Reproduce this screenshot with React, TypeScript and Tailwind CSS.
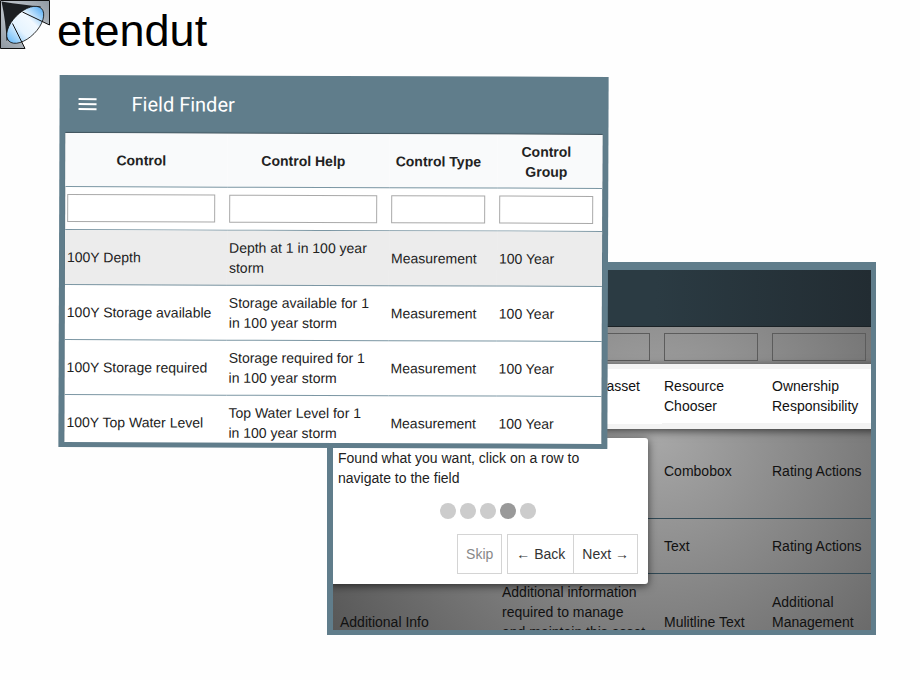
import React from "react";

const fields = [
  { name: "100Y Depth", help: "Depth at 1 in 100 year storm", active: true },
  { name: "100Y Storage available", help: "Storage available for 1 in 100 year storm", active: false },
  { name: "100Y Storage required", help: "Storage required for 1 in 100 year storm", active: false },
  { name: "100Y Top Water Level", help: "Top Water Level for 1 in 100 year storm", active: false },
];

const columns = ["Control", "Control Help", "Control Type", "Control Group"];

function Logo() {
  return (
    <svg width="50" height="50" viewBox="0 0 50 50" aria-hidden="true">
      <defs>
        <linearGradient id="plate" x1="0" y1="1" x2="1" y2="0">
          <stop offset="0" stopColor="#8f98a1" />
          <stop offset="0.5" stopColor="#c2c8ce" />
          <stop offset="1" stopColor="#8f98a1" />
        </linearGradient>
        <linearGradient id="lens" x1="0" y1="0" x2="1" y2="0">
          <stop offset="0" stopColor="#6ebcf8" />
          <stop offset="0.35" stopColor="#e6f4ff" />
          <stop offset="0.65" stopColor="#f2f9ff" />
          <stop offset="1" stopColor="#5fb2f5" />
        </linearGradient>
      </defs>
      <path d="M.5.5H49.5V25L28 15 15 28 25 48.500H.5Z" fill="url(#plate)" />
      <path d="M49.5 25V.5H.5V48.500H25" fill="none" stroke="#111" />
      <path d="M1.500 1.500Q24 5 41 6.500L25 25 6.500 41Q6 22 1.500 1.500Z" fill="#1c1f22" />
      <ellipse cx="25.200" cy="24.800" rx="23" ry="12.500" transform="rotate(-45 25.200 24.800)" fill="url(#lens)" stroke="#111" strokeWidth="0.800" />
      <path d="M22.500 12 49.500 25M12.500 23.500 25 48.500" fill="none" stroke="#111" />
    </svg>
  );
}

function FieldFinder() {
  return (
    <section className="z-10 col-span-2 col-start-1 row-span-2 row-start-1 mb-px flex rotate-[0.2deg] flex-col bg-[#607d8b] px-1.5 pb-[5px]">
      <header className="flex h-[58px] shrink-0 items-center gap-[30px] pl-2 text-white">
        <button type="button" aria-label="Menu" className="p-0.5">
          <svg width="24" height="24" viewBox="0 0 24 24" fill="currentColor" aria-hidden="true">
            <path d="M3 18h18v-2H3v2zm0-5h18v-2H3v2zm0-7v2h18V6H3z" />
          </svg>
        </button>
        <h2 className="font-[Roboto,sans-serif] text-xl">Field Finder</h2>
      </header>
      <div className="min-h-0 flex-1 overflow-hidden bg-white shadow-[0_-1px_1px_rgba(0,0,0,0.35)]">
        <table className="w-[calc(100%+3px)] table-fixed border-separate border-spacing-0 text-sm leading-5">
          <colgroup>
            <col className="w-[30%]" />
            <col className="w-[30%]" />
            <col className="w-[20%]" />
            <col className="w-[20%]" />
          </colgroup>
          <thead>
            <tr className="h-[54px] bg-[#f9fafb]">
              {columns.map((c) => (
                <th key={c} className="border-b border-[#7b96a3] pr-3 pl-0.5 font-bold">{c}</th>
              ))}
            </tr>
            <tr className="h-[43px]">
              {columns.map((c) => (
                <td key={c} className="border-b border-[#7b96a3] pr-3 pl-0.5">
                  <input aria-label={`Filter ${c}`} className="block h-7 w-full border border-[#a9a9a9] bg-white px-1" />
                </td>
              ))}
            </tr>
          </thead>
          <tbody>
            {fields.map((f) => (
              <tr key={f.name} className={f.active ? "h-[55px] bg-[#ececec]" : "h-[55px]"}>
                <td className="border-b border-[#7b96a3] pl-0.5 whitespace-nowrap">{f.name}</td>
                <td className="border-b border-[#7b96a3] pr-4 pl-0.5">{f.help}</td>
                <td className="border-b border-[#7b96a3] pl-0.5">Measurement</td>
                <td className="border-b border-[#7b96a3] pl-0.5">100 Year</td>
              </tr>
            ))}
          </tbody>
        </table>
      </div>
    </section>
  );
}

function TourStep() {
  return (
    <div role="dialog" aria-label="Tour" className="absolute top-[168px] -left-[5px] z-20 w-80 rounded-[3px] bg-white p-2.5 text-sm leading-5 shadow-[0_2px_8px_rgba(0,0,0,0.6)]">
      <p className="pr-12">Found what you want, click on a row to navigate to the field</p>
      <div className="my-[15px] flex justify-center gap-1">
        {[0, 1, 2, 3, 4].map((i) => (
          <button
            key={i}
            type="button"
            aria-label={`Step ${i + 1}`}
            className={i === 3 ? "size-4 rounded-full bg-[#999]" : "size-4 rounded-full bg-[#ccc]"}
          />
        ))}
      </div>
      <div className="flex h-10 justify-end text-[#333]">
        <button type="button" className="mr-[5px] border border-[#d4d4d4] px-2 text-[#888]">Skip</button>
        <button type="button" className="border border-[#d4d4d4] px-2">← Back</button>
        <button type="button" className="border border-l-0 border-[#d4d4d4] px-2">Next →</button>
      </div>
    </div>
  );
}

function TourWindow() {
  return (
    <section className="relative isolate col-span-2 col-start-2 row-span-2 row-start-2 flex flex-col overflow-hidden border-t-8 border-r-5 border-b-5 border-l-6 border-[#607d8b] bg-[radial-gradient(circle_at_60%_45%,#a8a8a8_0%,#8c8c8c_35%,#6c6c6c_75%,#585858_100%)]">
      <header className="h-[57px] shrink-0 border-b border-[#1b2226] bg-linear-to-r from-[#2b3b43] from-60% to-[#222c32]" />
      <table className="ml-[5px] w-[calc(100%+2px)] table-fixed border-separate border-spacing-0 text-sm leading-5 text-[#111]">
        <colgroup>
          <col className="w-[30%]" />
          <col className="w-[30%]" />
          <col className="w-[20%]" />
          <col className="w-[20%]" />
        </colgroup>
        <thead>
          <tr className="h-[42px]">
            {columns.map((c) => (
              <td key={c} className="pt-1.5 pr-3 pl-0.5 align-top">
                <input aria-label={`Filter assets by ${c}`} className="block h-7 w-full border border-[#5c5c5c] px-1" />
              </td>
            ))}
          </tr>
        </thead>
        <tbody>
          <tr className="relative h-[55px] bg-white shadow-[0_0_0_5px_#f3f3f3,0_2px_8px_5px_rgba(0,0,0,0.6)]">
            <td />
            <td className="pt-[7px] pr-[22px] text-right align-top">asset</td>
            <td className="border-b border-[#f3f3f3] pr-3 pl-0.5">Resource Chooser</td>
            <td className="border-b border-[#f3f3f3] pl-0.5">Ownership Responsibility</td>
          </tr>
          <tr className="h-[95px]">
            <td className="border-b border-[#2f4854]" />
            <td className="border-b border-[#2f4854]" />
            <td className="border-b border-[#2f4854] pl-0.5">Combobox</td>
            <td className="border-b border-[#2f4854] pl-0.5">Rating Actions</td>
          </tr>
          <tr className="h-[55px]">
            <td className="border-b border-[#2f4854]" />
            <td className="border-b border-[#2f4854]" />
            <td className="border-b border-[#2f4854] pl-0.5">Text</td>
            <td className="border-b border-[#2f4854] pl-0.5">Rating Actions</td>
          </tr>
          <tr className="h-[95px]">
            <td className="pl-0.5">Additional Info</td>
            <td className="pt-2 pr-3 pl-0.5 align-top">Additional information required to manage and maintain this asset</td>
            <td className="pl-0.5">Mulitline Text</td>
            <td className="pt-[18px] pr-3 pl-0.5 align-top">Additional Management</td>
          </tr>
        </tbody>
      </table>
      <TourStep />
    </section>
  );
}

export default function App() {
  return (
    <div className="min-h-screen bg-[#fefefe] font-['Liberation_Sans',Arial,sans-serif] text-[#222]">
      <header className="flex h-[76px] gap-[7px]">
        <Logo />
        <h1 className="text-[45px] leading-[62px] text-black">etendut</h1>
      </header>
      <main className="grid grid-cols-[minmax(0,268fr)_minmax(0,281fr)_minmax(0,268fr)] grid-rows-[186px_187px_186px] pr-11 pb-11 pl-[59px]">
        <FieldFinder />
        <TourWindow />
      </main>
    </div>
  );
}
